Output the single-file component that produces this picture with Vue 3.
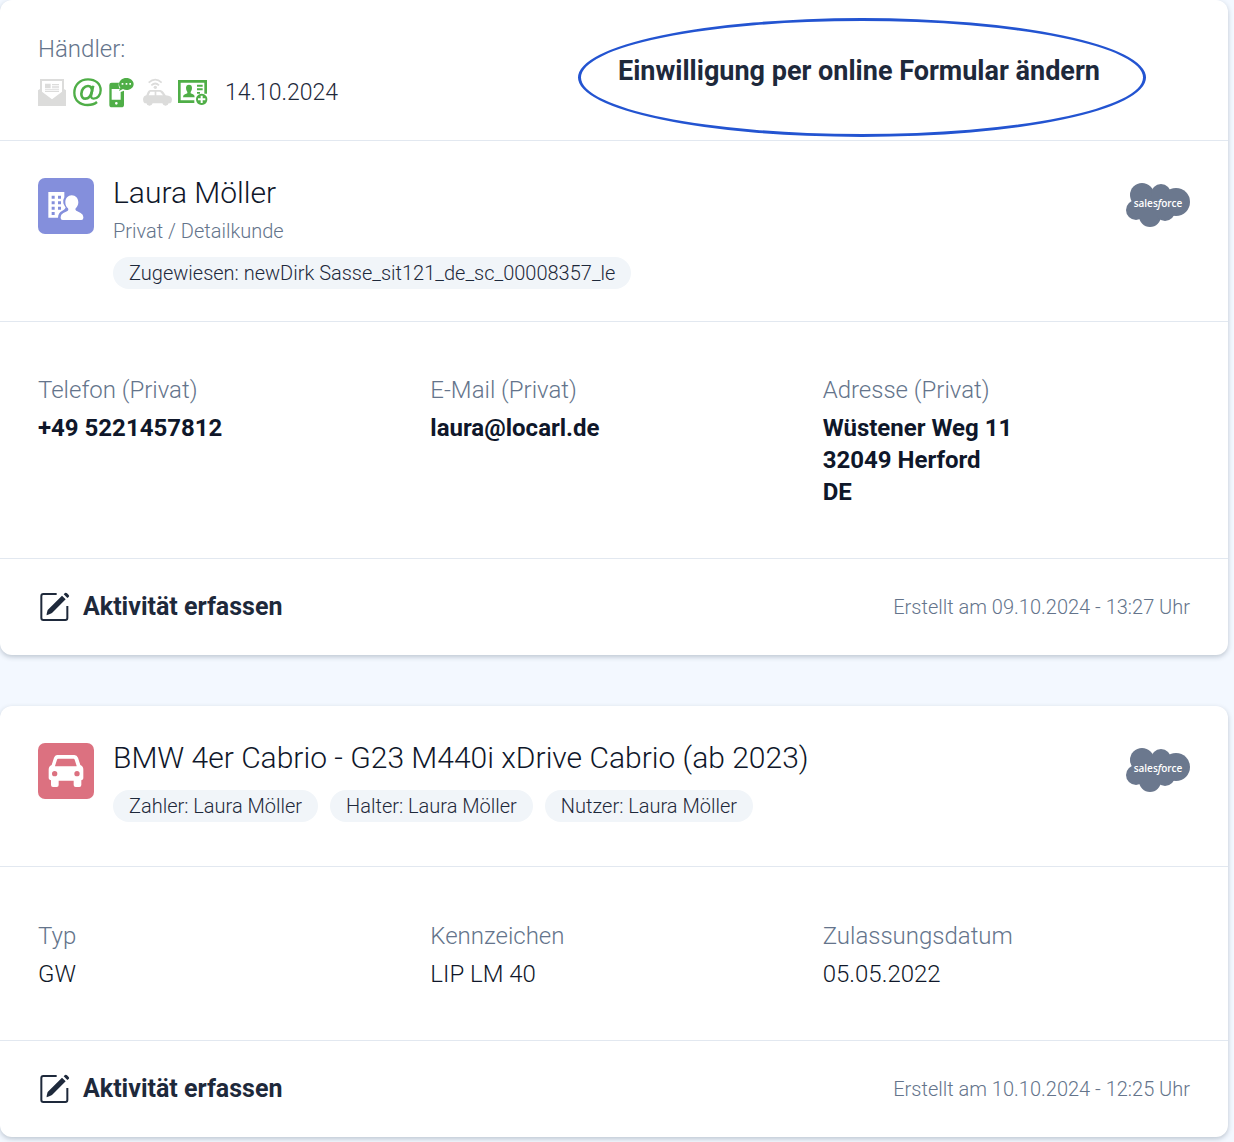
<script setup>
const consentDate = '14.10.2024'

const contact = [
  { label: 'Telefon (Privat)', lines: ['+49 5221457812'] },
  { label: 'E-Mail (Privat)', lines: ['laura@locarl.de'] },
  { label: 'Adresse (Privat)', lines: ['Wüstener Weg 11', '32049 Herford', 'DE'] },
]

const vehicle = [
  { label: 'Typ', lines: ['GW'] },
  { label: 'Kennzeichen', lines: ['LIP LM 40'] },
  { label: 'Zulassungsdatum', lines: ['05.05.2022'] },
]

const cards = [
  {
    id: 'customer',
    title: 'Laura Möller',
    subtitle: 'Privat / Detailkunde',
    badges: ['Zugewiesen: newDirk Sasse_sit121_de_sc_00008357_le'],
    fields: contact,
    strong: true,
    created: 'Erstellt am 09.10.2024 - 13:27 Uhr',
  },
  {
    id: 'vehicle',
    title: 'BMW 4er Cabrio - G23 M440i xDrive Cabrio (ab 2023)',
    subtitle: '',
    badges: ['Zahler: Laura Möller', 'Halter: Laura Möller', 'Nutzer: Laura Möller'],
    fields: vehicle,
    strong: false,
    created: 'Erstellt am 10.10.2024 - 12:25 Uhr',
  },
]
</script>

<template>
  <main class="page">
    <article v-for="card in cards" :key="card.id" class="card" :class="card.id">
      <section v-if="card.id === 'customer'" class="consent">
        <div class="dealer">
          <p class="label">Händler:</p>
          <div class="channels">
            <svg class="channel off" viewBox="0 0 90 90" aria-hidden="true">
              <path fill="currentColor" fill-rule="evenodd" d="M6 3H78V33L84 37V84H0V37L6 33ZM12 9V41L42 64L72 41V9Z" />
              <path fill="currentColor" d="M21 17h17v14H21zM42 18h21v3H42zM42 23h21v3H42zM42 28h21v3H42zM21 34h42v3H21zM21 39h42v3H21z" />
            </svg>
            <svg class="channel on" viewBox="0 0 90 90" aria-hidden="true">
              <path fill="none" stroke="currentColor" stroke-width="7" d="M72 72C64 79 54 81 44 81C20 81 4 66 4 44C4 21 21 4 45 4C68 4 83 18 83 37C83 52 73 62 62 62C55 62 53 57 55 50L61 23" />
              <path fill="none" stroke="currentColor" stroke-width="8" d="M57 39C57 29 52 24 45 24C34 24 25 35 25 47C25 56 30 62 37 62C47 62 54 52 57 39Z" />
            </svg>
            <svg class="channel on" viewBox="0 0 90 90" aria-hidden="true">
              <path fill="currentColor" fill-rule="evenodd" d="M11 14H33C31 20 32 27 36 33H11V65H38V42L48 38V80Q48 88 40 88H12Q4 88 4 80V21Q4 14 11 14ZM21 76a4 4 0 1 0 8 0a4 4 0 1 0 -8 0Z" />
              <path fill="currentColor" fill-rule="evenodd" d="M55 0C67 0 77 8 77 18C77 29 67 36 56 36C52 36 48 35 45 33L33 39L37 29C34 26 33 22 33 18C33 8 43 0 55 0ZM41 15v5h5v-5ZM53 15v5h5v-5ZM64 15v5h5v-5Z" />
            </svg>
            <svg class="channel off" viewBox="0 0 90 90" aria-hidden="true">
              <g fill="none" stroke="currentColor" stroke-width="5">
                <path d="M17 14Q37 -4 56 14" />
                <path d="M25 22Q37 11 48 22" />
              </g>
              <circle cx="37" cy="28" r="5" fill="currentColor" />
              <path fill="currentColor" fill-rule="evenodd" d="M22 36H52Q58 37 62 43L68 52Q87 54 87 64Q87 73 82 76H77A10 10 0 0 1 58 76H29A10 10 0 0 1 10 76H5Q0 72 0 64Q1 54 10 52L14 42Q17 36 22 36ZM22 41L17 52H35V41ZM40 41V52H60L54 44Q52 41 49 41Z" />
              <circle cx="19" cy="75" r="7" fill="currentColor" />
              <circle cx="68" cy="75" r="7" fill="currentColor" />
            </svg>
            <svg class="channel on" viewBox="0 0 90 90" aria-hidden="true">
              <path fill="currentColor" fill-rule="evenodd" d="M0 6H87V47H79V14H8V67H49V75H0Z" />
              <path fill="currentColor" d="M15 58Q15 51 21 49L28 46V42Q24 38 24 30Q24 20 33 20Q42 20 42 30Q42 38 38 42V46L45 49Q50 51 50 58ZM57 20h17v6H57zM57 31h17v6H57zM57 42h9v5H57z" />
              <path fill="currentColor" fill-rule="evenodd" d="M71 47a17 17 0 1 0 .1 0ZM68 53H74V61H82V67H74V75H68V67H60V61H68Z" />
            </svg>
            <span class="date">{{ consentDate }}</span>
          </div>
        </div>
        <div class="highlight">
          <button type="button" class="consent-button">Einwilligung per online Formular ändern</button>
        </div>
      </section>

      <header class="head">
        <svg v-if="card.id === 'customer'" class="tile person" viewBox="0 0 168 168" aria-hidden="true">
          <path fill="#fff" fill-rule="evenodd" d="M31 42H79V58Q74 66 76 76Q79 83 83 89Q80 95 72 99Q61 104 60 119H31ZM41 53v9h9v-9ZM60 53v9h9v-9ZM41 70v9h9v-9ZM60 70v9h9v-9ZM41 86v9h9v-9ZM60 86v9h9v-9ZM41 102v9h9v-9Z" />
          <path fill="#fff" d="M101 52C113 52 121 61 121 73C121 81 117 87 113 91C111 95 113 98 118 100L128 105Q136 109 136 117V120Q136 126 130 126H74Q68 126 68 120V117Q68 109 76 105L87 100C91 98 92 95 90 91C85 87 82 81 82 73C82 61 90 52 101 52Z" />
        </svg>
        <svg v-else class="tile car" viewBox="0 0 168 168" aria-hidden="true">
          <path fill="#fff" fill-rule="evenodd" d="M57 36H109Q117 36 120 44L127 66Q136 70 136 80V106Q136 111 130 112V126Q130 132 124 132H113Q107 132 107 126V113H62V126Q62 132 56 132H45Q39 132 39 126V112Q32 111 32 106V80Q32 70 41 66L48 44Q51 36 57 36ZM60 47Q58 47 57 50L51 69Q51 70 53 70H114Q116 70 116 69L110 50Q109 47 107 47ZM42 92a8 8 0 1 0 16 0a8 8 0 1 0 -16 0ZM109 92a8 8 0 1 0 16 0a8 8 0 1 0 -16 0Z" />
        </svg>
        <div class="summary">
          <h2 class="title">{{ card.title }}</h2>
          <p v-if="card.subtitle" class="subtitle">{{ card.subtitle }}</p>
          <ul class="badges">
            <li v-for="badge in card.badges" :key="badge" class="badge">{{ badge }}</li>
          </ul>
        </div>
        <svg class="salesforce" viewBox="0 0 64 46" role="img" aria-label="salesforce">
          <g fill="#6b788e">
            <circle cx="16" cy="13" r="12" />
            <circle cx="35" cy="12" r="10" />
            <circle cx="50" cy="20" r="14" />
            <circle cx="10" cy="28" r="10" />
            <circle cx="24" cy="34" r="11" />
            <circle cx="39" cy="29" r="10" />
            <path d="M10 14H46V34H10Z" />
          </g>
          <text x="32" y="25" text-anchor="middle">sales<tspan font-style="italic">f</tspan>orce</text>
        </svg>
      </header>

      <dl class="fields" :class="{ strong: card.strong }">
        <div v-for="field in card.fields" :key="field.label">
          <dt class="label">{{ field.label }}</dt>
          <dd v-for="line in field.lines" :key="line">{{ line }}</dd>
        </div>
      </dl>

      <footer class="foot">
        <button type="button" class="activity">
          <svg viewBox="0 0 90 90" aria-hidden="true">
            <path fill="none" stroke="currentColor" stroke-width="6" d="M50 6H10Q4 6 4 12V78Q4 84 10 84H76Q82 84 82 78V42" />
            <path fill="currentColor" d="M66 11L77 22L36 63Q32 66 20 70Q19 67 23 54ZM71 7L75 3Q78 1 81 4L86 9Q89 12 86 15L82 18Z" />
          </svg>
          <span>Aktivität erfassen</span>
        </button>
        <p class="created">{{ card.created }}</p>
      </footer>
    </article>
  </main>
</template>

<style>
body {
  margin: 0;
  background: #f3f8ff;
}
</style>

<style scoped>
.page {
  display: flex;
  flex-direction: column;
  gap: 51px;
  padding: 0 6px 5px 0;
  color: #1e293b;
  font-family: Roboto, "Liberation Sans", sans-serif;
  font-size: 24px;
  font-weight: 300;
  line-height: 32px;
}

p,
h2,
ul,
dl,
dd {
  margin: 0;
  padding: 0;
}

button {
  padding: 0;
  border: 0;
  background: none;
  color: inherit;
  font: inherit;
  font-weight: 700;
  cursor: pointer;
}

.card {
  border-radius: 12px;
  background: #fff;
  box-shadow: 0 2px 5px rgba(30, 50, 70, 0.25);
}

.label {
  color: #64748b;
}

.consent {
  display: flex;
  justify-content: space-between;
  padding: 18px 82px 3px 38px;
  border-bottom: 1px solid #e2e8f0;
}

.dealer {
  padding-top: 15px;
}

.channels {
  display: flex;
  align-items: center;
  gap: 5px;
  margin-top: 12px;
}

.channel {
  width: 30px;
  height: 30px;
}

.on {
  color: #4fae47;
}

.off {
  color: #dcdcdb;
}

.date {
  margin-left: 12px;
  font-size: 23px;
}

.highlight {
  display: flex;
  align-items: center;
  justify-content: center;
  box-sizing: border-box;
  width: 568px;
  height: 119px;
  padding: 0 6px 14px 0;
  border: 3px solid #2354d1;
  border-radius: 50%;
}

.consent-button {
  font-size: 27px;
  white-space: nowrap;
}

.head {
  display: flex;
  align-items: flex-start;
  padding: 32px 38px;
  border-bottom: 1px solid #e2e8f0;
}

.vehicle .head {
  padding-bottom: 44px;
}

.tile {
  flex: none;
  width: 56px;
  height: 56px;
  margin: 5px 19px 0 0;
  border-radius: 7px;
}

.person {
  background: #848fdc;
}

.car {
  background: #dc7180;
}

.summary {
  flex: 1;
}

.title {
  color: #0f172a;
  font-size: 30px;
  font-weight: 300;
  line-height: 40px;
}

.subtitle {
  margin-top: 4px;
  color: #64748b;
  font-size: 20px;
  line-height: 28px;
}

.badges {
  display: flex;
  flex-wrap: wrap;
  gap: 12px;
  margin-top: 12px;
  list-style: none;
}

.badge {
  padding: 0 16px;
  border-radius: 16px;
  background: #f1f5f9;
  font-size: 20px;
}

.salesforce {
  flex: none;
  width: 64px;
  height: 46px;
  margin-top: 9px;
}

.salesforce text {
  fill: #fff;
  font-family: "Open Sans", sans-serif;
  font-size: 10px;
  font-weight: 600;
}

.fields {
  display: grid;
  grid-template-columns: repeat(3, 1fr);
  gap: 25px;
  padding: 52px 38px 50px;
  border-bottom: 1px solid #e2e8f0;
}

.vehicle .fields {
  padding-top: 53px;
}

.fields dt {
  margin-bottom: 6px;
}

.fields dd {
  color: #0f172a;
}

.strong dd {
  font-weight: 700;
}

.foot {
  display: flex;
  align-items: center;
  justify-content: space-between;
  padding: 32px 38px;
}

.activity {
  display: flex;
  align-items: center;
  gap: 13px;
  padding-left: 2px;
  font-size: 25px;
}

.activity svg {
  width: 30px;
  height: 30px;
}

.created {
  color: #64748b;
  font-size: 20px;
}
</style>
